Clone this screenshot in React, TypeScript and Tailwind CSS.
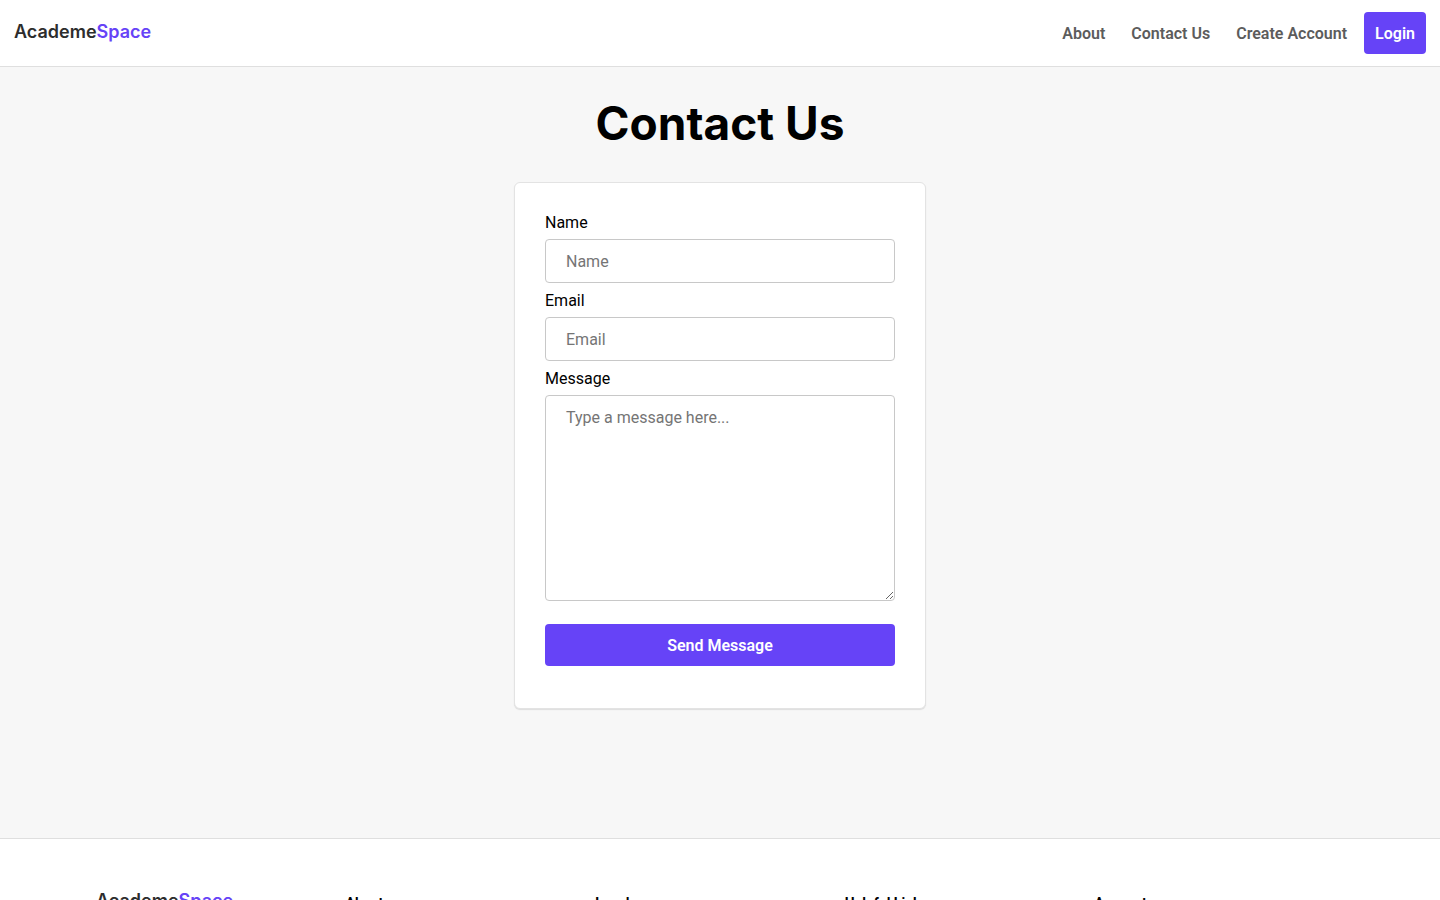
const navLinks = ['About', 'Contact Us', 'Create Account'];
const footerColumns = ['About', 'Legal', 'Helpful Links', 'Account'];

const Logo = () => {
  return (
    <a href="#" className="font-['Inter',sans-serif] text-lg leading-6 font-semibold text-[#2d2d2d]">
      Academe<span className="text-[#6643f7]">Space</span>
    </a>
  );
};

const Header = () => {
  return (
    <header className="flex justify-between items-center px-3.5 py-3 bg-white border-b border-[#dfdfdf]">
      <div className="pb-0.5">
        <Logo />
      </div>
      <nav>
        <ul className="flex items-center text-base font-semibold text-[#5c5c5c]">
          {navLinks.map((link) => (
            <li key={link}>
              <a href="#" className="block px-[13px] pt-0.5">
                {link}
              </a>
            </li>
          ))}
          <li>
            <a
              href="#"
              className="flex items-center ml-1 px-[11px] pt-0.5 h-[42px] text-white bg-[#6643f7] rounded"
            >
              Login
            </a>
          </li>
        </ul>
      </nav>
    </header>
  );
};

const ContactForm = () => {
  return (
    <form className="flex flex-col w-full max-w-[412px] px-[30px] pt-[30px] pb-[42px] text-base bg-white border border-[#e3e3e3] rounded-md shadow-[0_1px_1px_#dddddd]">
      <label htmlFor="name" className="mb-1.5 leading-5">
        Name
      </label>
      <input
        id="name"
        type="text"
        placeholder="Name"
        className="mb-2 px-5 h-11 border border-[#c8c8c8] rounded placeholder:text-[#757575]"
      />
      <label htmlFor="email" className="mb-1.5 leading-5">
        Email
      </label>
      <input
        id="email"
        type="email"
        placeholder="Email"
        className="mb-2 px-5 h-11 border border-[#c8c8c8] rounded placeholder:text-[#757575]"
      />
      <label htmlFor="message" className="mb-1.5 leading-5">
        Message
      </label>
      <textarea
        id="message"
        placeholder="Type a message here..."
        className="mb-[23px] px-5 py-3 h-[206px] leading-5 border border-[#c8c8c8] rounded resize placeholder:text-[#757575]"
      />
      <button
        type="button"
        className="pt-0.5 h-[42px] font-semibold text-white bg-[#6643f7] rounded"
      >
        Send Message
      </button>
    </form>
  );
};

const Footer = () => {
  return (
    <footer className="px-24 pt-[50px] pb-16 bg-white border-t border-[#dfdfdf]">
      <div className="grid grid-cols-5">
        <div>
          <Logo />
        </div>
        {footerColumns.map((title) => (
          <h2 key={title} className="pt-1 text-sm font-bold">
            {title}
          </h2>
        ))}
      </div>
    </footer>
  );
};

const App = () => {
  return (
    <div className="font-['Roboto',sans-serif] text-black bg-[#f7f7f7]">
      <Header />
      <main className="flex flex-col items-center px-4 pt-8 pb-[129px]">
        <h1 className="mb-[35px] font-['Inter',sans-serif] text-[46px] leading-12 font-bold">
          Contact Us
        </h1>
        <ContactForm />
      </main>
      <Footer />
    </div>
  );
};

export default App;
